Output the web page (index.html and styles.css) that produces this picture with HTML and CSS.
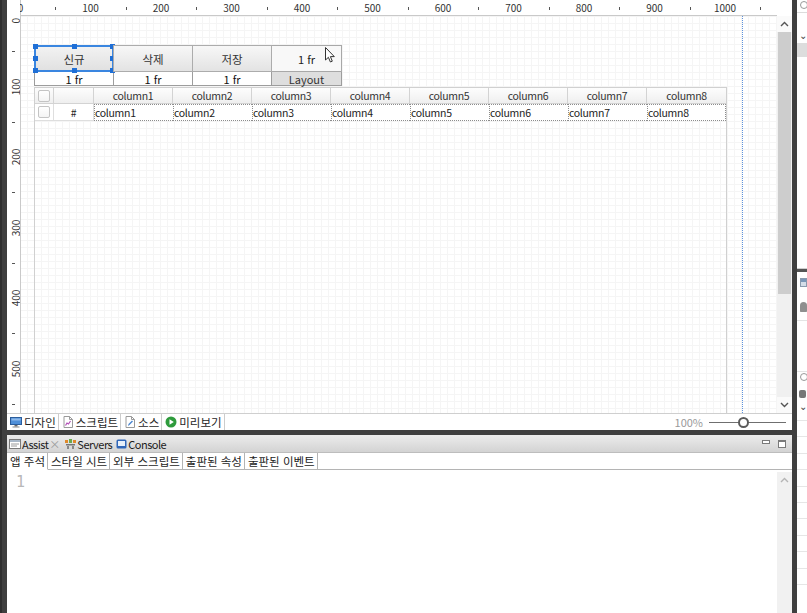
FILE: index.html
```html
<!DOCTYPE html>
<html lang="ko">
<head>
<meta charset="utf-8">
<title>Designer</title>
<link rel="stylesheet" href="styles.css">
</head>
<body>
<div class="window">
  <div class="edge-left"></div>
  <div class="main">
    <section class="designer">
      <div class="ruler-row">
        <div class="ruler-corner"></div>
        <div class="ruler-top">
          <div class="rt-seg"><span class="rt-num">0</span><i class="rt-tick"></i></div>
          <div class="rt-seg"><span class="rt-num">100</span><i class="rt-tick"></i></div>
          <div class="rt-seg"><span class="rt-num">200</span><i class="rt-tick"></i></div>
          <div class="rt-seg"><span class="rt-num">300</span><i class="rt-tick"></i></div>
          <div class="rt-seg"><span class="rt-num">400</span><i class="rt-tick"></i></div>
          <div class="rt-seg"><span class="rt-num">500</span><i class="rt-tick"></i></div>
          <div class="rt-seg"><span class="rt-num">600</span><i class="rt-tick"></i></div>
          <div class="rt-seg"><span class="rt-num">700</span><i class="rt-tick"></i></div>
          <div class="rt-seg"><span class="rt-num">800</span><i class="rt-tick"></i></div>
          <div class="rt-seg"><span class="rt-num">900</span><i class="rt-tick"></i></div>
          <div class="rt-seg"><span class="rt-num">1000</span><i class="rt-tick"></i></div>
        </div>
        <div class="ruler-pad"></div>
      </div>
      <div class="design-body">
        <div class="ruler-left">
          <div class="rl-seg"><span class="rl-num">0</span><i class="rl-tick"></i></div>
          <div class="rl-seg"><span class="rl-num">100</span><i class="rl-tick"></i></div>
          <div class="rl-seg"><span class="rl-num">200</span><i class="rl-tick"></i></div>
          <div class="rl-seg"><span class="rl-num">300</span><i class="rl-tick"></i></div>
          <div class="rl-seg"><span class="rl-num">400</span><i class="rl-tick"></i></div>
          <div class="rl-seg"><span class="rl-num">500</span><i class="rl-tick"></i></div>
        </div>
        <div class="canvas">
          <div class="stage">
            <div class="layout-grid">
              <div class="btn selected">신규
                <i class="h h-tl"></i><i class="h h-tc"></i><i class="h h-tr"></i>
                <i class="h h-ml"></i><i class="h h-mr"></i>
                <i class="h h-bl"></i><i class="h h-bc"></i><i class="h h-br"></i>
              </div>
              <div class="btn">삭제</div>
              <div class="btn">저장</div>
              <div class="fr-box">1 fr</div>
              <div class="fr-cell">1 fr</div>
              <div class="fr-cell">1 fr</div>
              <div class="fr-cell">1 fr</div>
              <div class="fr-cell layout">Layout</div>
            </div>
            <div class="table">
              <div class="t-row t-head">
                <div class="cell chk"><i class="checkbox"></i></div>
                <div class="cell"></div>
                <div class="cell">column1</div>
                <div class="cell">column2</div>
                <div class="cell">column3</div>
                <div class="cell">column4</div>
                <div class="cell">column5</div>
                <div class="cell">column6</div>
                <div class="cell">column7</div>
                <div class="cell last">column8</div>
              </div>
              <div class="t-row t-body">
                <div class="cell chk"><i class="checkbox"></i></div>
                <div class="cell num">#</div>
                <div class="cell dot">column1</div>
                <div class="cell dot">column2</div>
                <div class="cell dot">column3</div>
                <div class="cell dot">column4</div>
                <div class="cell dot">column5</div>
                <div class="cell dot">column6</div>
                <div class="cell dot">column7</div>
                <div class="cell dot last">column8</div>
              </div>
            </div>
          </div>
          <div class="guide"></div>
          <svg class="cursor" width="10" height="16" viewBox="0 0 10 16"><path d="M0.5 0.5V13L3.4 10.3L5.4 15L7.3 14.2L5.4 9.6H9.3Z" fill="#fff" stroke="#333" stroke-width="1" stroke-linejoin="round"/></svg>
        </div>
        <div class="vscroll">
          <div class="sb-arrow"><svg width="9" height="6" viewBox="0 0 9 6"><path d="M1 5L4.5 1.5L8 5" fill="none" stroke="#555" stroke-width="1.4"/></svg></div>
          <div class="sb-track"><div class="sb-thumb"></div></div>
          <div class="sb-arrow"><svg width="9" height="6" viewBox="0 0 9 6"><path d="M1 1L4.5 4.5L8 1" fill="none" stroke="#555" stroke-width="1.4"/></svg></div>
        </div>
      </div>
      <div class="design-tabs">
        <div class="dtab active">
          <svg width="12" height="12" viewBox="0 0 12 12"><rect x="0.5" y="1.5" width="11" height="7" fill="#4f8fd8" stroke="#2b5d9c"/><rect x="1.5" y="2.5" width="9" height="2" fill="#8fbaea"/><rect x="4.5" y="9" width="3" height="1.5" fill="#6a6a6a"/><rect x="2.5" y="10.5" width="7" height="1" fill="#8a8a8a"/></svg>
          <span>디자인</span>
        </div>
        <div class="dtab">
          <svg width="12" height="12" viewBox="0 0 12 12"><path d="M2 0.5H7.5L10.5 3.5V11.5H2Z" fill="#fff" stroke="#9a9a9a"/><path d="M7.5 0.5V3.5H10.5" fill="none" stroke="#9a9a9a"/><path d="M3.5 9.5L5 7L6.5 8L8.5 5" fill="none" stroke="#b352b8" stroke-width="1.2"/></svg>
          <span>스크립트</span>
        </div>
        <div class="dtab">
          <svg width="12" height="12" viewBox="0 0 12 12"><path d="M2 0.5H7.5L10.5 3.5V11.5H2Z" fill="#fff" stroke="#9a9a9a"/><path d="M7.5 0.5V3.5H10.5" fill="none" stroke="#9a9a9a"/><path d="M4 10L4.5 8L8 4.5L9 5.5L5.5 9Z" fill="#4a86d0"/></svg>
          <span>소스</span>
        </div>
        <div class="dtab">
          <svg width="12" height="12" viewBox="0 0 12 12"><circle cx="6" cy="6" r="5.5" fill="#2e9b3c"/><path d="M4.5 3.2L8.8 6L4.5 8.8Z" fill="#fff"/></svg>
          <span>미리보기</span>
        </div>
        <div class="zoom-ctl">
          <span class="zoom-val">100%</span>
          <div class="slider"><i class="knob"></i></div>
        </div>
      </div>
    </section>
    <div class="sash"></div>
    <section class="bottom">
      <div class="view-header">
        <div class="vtab active">
          <svg width="12" height="10" viewBox="0 0 12 10"><rect x="0.5" y="0.5" width="11" height="9" fill="#fff" stroke="#7a7a7a"/><rect x="1" y="1" width="10" height="2" fill="#a9b8c8"/><path d="M2 5H10M2 7H8" stroke="#9a9a9a"/></svg>
          <span>Assist</span><span class="close">×</span>
        </div>
        <div class="vtab">
          <svg width="11" height="10" viewBox="0 0 11 10"><rect x="0" y="1" width="3" height="3" fill="#e08a2a"/><rect x="4" y="0" width="3" height="4" fill="#6aa84f"/><rect x="8" y="1" width="3" height="3" fill="#e08a2a"/><rect x="1" y="5" width="9" height="1.5" fill="#777"/><rect x="2" y="7" width="2" height="3" fill="#888"/><rect x="7" y="7" width="2" height="3" fill="#888"/></svg>
          <span>Servers</span>
        </div>
        <div class="vtab">
          <svg width="11" height="10" viewBox="0 0 11 10"><rect x="0.5" y="0.5" width="10" height="9" rx="1.5" fill="#2f66b8"/><rect x="2" y="2" width="7" height="5" fill="#e6effa"/></svg>
          <span>Console</span>
        </div>
        <div class="view-ctl">
          <i class="ctl-min"></i>
          <i class="ctl-max"></i>
        </div>
      </div>
      <div class="sub-tabs">
        <div class="stab active">앱 주석</div>
        <div class="stab">스타일 시트</div>
        <div class="stab">외부 스크립트</div>
        <div class="stab">출판된 속성</div>
        <div class="stab">출판된 이벤트</div>
        <div class="stab-fill"></div>
      </div>
      <div class="editor">
        <div class="gutter">1</div>
        <div class="code"></div>
        <div class="ed-scroll">
          <svg width="9" height="6" viewBox="0 0 9 6"><path d="M1 5L4.5 1.5L8 5" fill="none" stroke="#b5b5b5" stroke-width="1.4"/></svg>
        </div>
      </div>
    </section>
  </div>
  <div class="edge-right"></div>
  <div class="side">
    <div class="s-search"><i class="s-glass"></i></div>
    <div class="s-gap"></div>
    <div class="s-chev">⌄</div>
    <div class="s-block"></div>
    <div class="s-space"></div>
    <div class="s-sash"></div>
    <div class="s-icon1"></div>
    <div class="s-icon2"></div>
    <div class="s-gap2"></div>
    <div class="s-search2"><i class="s-glass"></i></div>
    <div class="s-icon3"></div>
    <div class="s-chev2">⌄</div>
    <div class="s-rows">
      <i></i><i></i><i></i><i></i><i></i><i></i><i></i><i></i><i></i><i></i><i></i>
    </div>
  </div>
</div>
</body>
</html>
```
FILE: styles.css
```css
* { box-sizing: border-box; margin: 0; padding: 0; }
html, body { width: 807px; height: 613px; overflow: hidden; }
body {
  background: #434343;
  font-family: "Noto Sans CJK KR", "Noto Sans", sans-serif;
  font-size: 11px;
  color: #222;
}
.window { display: flex; height: 613px; }
.edge-left { width: 7px; background: #3f3f3f; border-left: 2px solid #2e2e2e; }
.edge-right { width: 5px; background: #3f3f3f; }
.main { width: 785px; display: flex; flex-direction: column; background: #fff; }

/* ---------- designer ---------- */
.designer { height: 430px; display: flex; flex-direction: column; }
.ruler-row { height: 16px; display: flex; background: #fff; }
.ruler-corner { width: 13px; }
.ruler-top {
  width: 757px; display: flex; overflow: hidden;
  border-bottom: 1px solid #c9c9c9;
  box-shadow: inset 1px 0 #c9c9c9;
}
.ruler-pad { width: 15px; }
.rt-seg { flex: 0 0 70.5px; position: relative; height: 15px; }
.rt-num {
  position: absolute; left: 0; top: 1px; transform: translateX(-50%);
  font-size: 10px; line-height: 13px; color: #333;
}
.rt-seg:first-child .rt-num { transform: translateX(-40%); }
.rt-tick { position: absolute; left: 50%; top: 7px; width: 1px; height: 3px; background: #555; }

.design-body { height: 397px; display: flex; }
.ruler-left { width: 13px; overflow: hidden; background: #fff; display: flex; flex-direction: column; }
.rl-seg { flex: 0 0 70.5px; position: relative; }
.rl-num {
  position: absolute; top: 0; left: 9px;
  transform: translate(-50%, -50%) rotate(-90deg);
  font-size: 10px; line-height: 12px; color: #333; white-space: nowrap;
}
.rl-seg:first-child .rl-num { transform: translate(-50%, -10%) rotate(-90deg); }
.rl-tick { position: absolute; top: 50%; left: 5px; width: 3px; height: 1px; background: #555; }

.canvas {
  width: 757px; position: relative; overflow: hidden;
  background-color: #fff;
  background-image:
    linear-gradient(#f5f5f5 1px, transparent 1px),
    linear-gradient(90deg, #f5f5f5 1px, transparent 1px);
  background-size: 7px 7px;
  box-shadow: inset 1px 0 #c9c9c9;
}
.stage { padding: 29px 0 0 14px; display: flex; flex-direction: column; }

.layout-grid {
  display: grid;
  grid-template-columns: 80px 79px 79px 70px;
  grid-template-rows: 27px 14px;
  width: 308px;
}
.btn {
  position: relative;
  display: flex; align-items: center; justify-content: center;
  background: linear-gradient(#f7f7f7, #e3e3e3);
  border: 1px solid #acacac;
  margin-left: -1px;
  color: #333; font-size: 11.5px;
}
.btn:first-child { margin-left: 0; }
.btn.selected { border: 2px solid #3a86e0; background: linear-gradient(#f2f2f2, #e1e1e1); }
.h { position: absolute; width: 5px; height: 5px; background: #1f6fd6; }
.h-tl { left: -3px; top: -3px; }
.h-tc { left: calc(50% - 2.5px); top: -3px; }
.h-tr { right: -3px; top: -3px; }
.h-ml { left: -3px; top: calc(50% - 2.5px); }
.h-mr { right: -3px; top: calc(50% - 2.5px); }
.h-bl { left: -3px; bottom: -3px; }
.h-bc { left: calc(50% - 2.5px); bottom: -3px; }
.h-br { right: -3px; bottom: -3px; }
.fr-box {
  display: flex; align-items: center; justify-content: center;
  background: #f8f8f8; border: 1px solid #a8a8a8; margin-left: -1px;
  font-size: 11px; color: #222;
}
.fr-cell {
  display: flex; align-items: center; justify-content: center;
  background: #fff; border: 1px solid #9d9d9d; border-top: none; margin-left: -1px;
  font-size: 11px; line-height: 12px; color: #111;
}
.fr-cell:nth-child(5) { margin-left: 0; }
.fr-cell.layout { background: #dedede; color: #333; }

.table {
  width: 693px; height: 330px;
  border-left: 1px solid #d0d0d0; border-right: 1px solid #d0d0d0;
  margin-top: 1px;
}
.t-row { display: grid; grid-template-columns: 19px 40px repeat(7, 79px) 79px; height: 17px; }
.t-head { border-top: 1px solid #d0d0d0; height: 17px; }
.t-head .cell {
  background: linear-gradient(#fdfdfd, #efefef);
  border-right: 1px solid #d3d3d3; border-bottom: 1px solid #d3d3d3;
  display: flex; align-items: center; justify-content: center;
  color: #333; font-size: 10.5px; letter-spacing: -0.3px;
}
.cell.last { border-right: none !important; }
.t-body .cell {
  display: flex; align-items: center;
  font-size: 10.5px; letter-spacing: -0.3px; color: #222; background: #fff;
}
.t-body .chk, .t-body .num {
  border-right: 1px solid #dedede; border-bottom: 1px solid #dedede;
  justify-content: center;
}
.t-body .dot {
  border: 1px dotted #8c8c8c; border-right: none;
  padding-left: 0;
}
.t-body .dot.last { border-right: 1px dotted #8c8c8c !important; }
.checkbox {
  width: 12px; height: 12px; border: 1px solid #c4c4c4; border-radius: 2px;
  background: linear-gradient(#fff, #f4f4f4);
}
.guide {
  position: absolute; left: 722px; top: 0; bottom: 0;
  border-left: 1px dotted #5d92dc;
}
.cursor { position: absolute; left: 305px; top: 31px; }

.vscroll { width: 15px; display: flex; flex-direction: column; background: #f4f4f4; }
.sb-arrow { height: 16px; display: flex; align-items: center; justify-content: center; background: #fafafa; }
.sb-track { flex: 1; background: #f0f0f0; }
.sb-thumb { height: 262px; margin: 0 1px; background: #cdcdcd; }

.design-tabs {
  height: 17px; display: flex; align-items: stretch;
  border-top: 1px solid #cfcfcf; background: #fff;
}
.dtab {
  display: flex; align-items: center; gap: 2px;
  padding: 0 2px 0 3px;
  border-right: 1px solid #cccccc;
  font-size: 11.5px; color: #1e1e1e; line-height: 14px;
}
.dtab svg { flex: 0 0 auto; }
.zoom-ctl { margin-left: auto; display: flex; align-items: center; padding-right: 6px; }
.zoom-val { color: #9a9a9a; font-size: 11px; margin-right: 6px; }
.slider { width: 77px; height: 1px; background: #6f6f6f; position: relative; }
.knob {
  position: absolute; left: 29px; top: -5px; width: 11px; height: 11px;
  border-radius: 50%; border: 2px solid #5a5a5a; background: #fff;
}

.sash { height: 5px; background: #3f3f3f; }

/* ---------- bottom view ---------- */
.bottom { flex: 1; display: flex; flex-direction: column; }
.view-header {
  height: 18px; display: flex; align-items: center;
  background: linear-gradient(#ececec, #d3d3d3);
  border-bottom: 1px solid #bdbdbd;
}
.vtab {
  display: flex; align-items: center; gap: 1px; padding-left: 2px;
  font-size: 11px; letter-spacing: -0.5px; color: #1c1c1c; line-height: 16px; height: 100%;
}
.vtab .close { color: #9a9a9a; font-size: 11px; letter-spacing: 0; margin-right: 1px; }
.vtab + .vtab { margin-left: 2px; }
.view-ctl { margin-left: auto; display: flex; align-items: center; gap: 8px; padding-right: 6px; }
.ctl-min { width: 8px; height: 4px; border: 1px solid #7a7a7a; background: #fff; margin-top: -3px; }
.ctl-max { width: 8px; height: 8px; border: 1px solid #7a7a7a; border-top-width: 2px; background: #fff; }

.sub-tabs { height: 17px; display: flex; background: #fff; }
.stab {
  padding: 0 2px 0 3px; display: flex; align-items: center;
  border-right: 1px solid #b4b4b4; border-bottom: 1px solid #b4b4b4;
  font-size: 11.5px; color: #1c1c1c; white-space: nowrap;
}
.stab.active { border-bottom-color: transparent; }
.stab-fill { flex: 1; border-bottom: 1px solid #b4b4b4; }

.editor { flex: 1; display: flex; background: #fff; }
.gutter {
  width: 30px; padding: 2px 0 0 9px;
  font-family: "DejaVu Sans Mono", monospace; font-size: 15px; line-height: 20px; color: #b8b8b8;
}
.code { flex: 1; }
.ed-scroll {
  width: 15px; margin-top: 2px; background: #f1f1f1;
  display: flex; justify-content: center; padding-top: 5px;
}

/* ---------- side strip ---------- */
.side { width: 10px; background: #fff; display: flex; flex-direction: column; overflow: hidden; }
.s-search { height: 13px; border-bottom: 1px solid #dcdcdc; position: relative; }
.s-glass { position: absolute; left: 3px; top: 1px; width: 8px; height: 8px; border: 1px solid #999; border-radius: 50%; }
.s-gap { height: 18px; }
.s-chev { height: 12px; line-height: 8px; padding-left: 2px; font-size: 10px; color: #444; }
.s-block { height: 14px; background: #dddddd; }
.s-space { height: 212px; border-bottom: 1px solid #cfcfcf; }
.s-sash { height: 3px; background: #555; }
.s-icon1 { height: 9px; margin: 6px 0 0 3px; background: linear-gradient(#7b97b8 0 3px, #d4dde8 3px); border: 1px solid #8a9aae; }
.s-icon2 { height: 10px; margin: 15px 0 0 3px; background: #8f8f8f; border-radius: 5px 5px 1px 1px; width: 7px; }
.s-gap2 { height: 52px; border-top: 1px solid #e4e4e4; margin-top: 8px; border-bottom: 1px solid #e4e4e4; }
.s-search2 { height: 14px; position: relative; }
.s-icon3 { height: 8px; width: 7px; margin: 4px 0 0 2px; background: #777; border-radius: 2px; }
.s-chev2 { height: 12px; line-height: 8px; padding-left: 2px; font-size: 10px; color: #444; margin-top: 4px; }
.s-rows { display: flex; flex-direction: column; margin-top: 6px; }
.s-rows i { display: block; height: 16.4px; border-top: 1px solid #e6e6e6; }
```
